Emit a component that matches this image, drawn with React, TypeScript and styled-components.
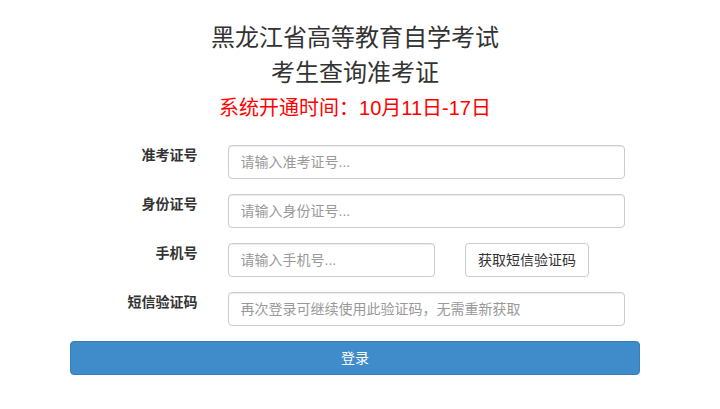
import React from "react";
import styled, { createGlobalStyle } from "styled-components";

const Global = createGlobalStyle`
  html, body { margin: 0; padding: 0; background: #fff; }
  body {
    font-family: "Liberation Sans", Arial, "Noto Sans CJK SC", sans-serif;
    font-size: 14px;
    color: #333;
  }
  * { box-sizing: border-box; }
`;

const Page = styled.div`
  padding: 20px 80px 0 70px;
  width: 720px;
`;

const Header = styled.header`
  text-align: center;
`;

const Title = styled.h1`
  margin: 0;
  font-size: 24px;
  line-height: 35px;
  font-weight: normal;
  color: #333;
`;

const Notice = styled.p`
  margin: 4px 0 0;
  font-size: 20px;
  line-height: 28px;
  color: #ff0000;
`;

const Form = styled.form`
  margin-top: 23px;
`;

const Row = styled.div`
  display: grid;
  grid-template-columns: 127.5px 1fr;
  column-gap: 30px;
  padding-right: 15px;
  margin-bottom: 15px;
`;

const Label = styled.label`
  text-align: right;
  font-weight: bold;
  font-size: 14px;
  line-height: 20px;
  color: #333;
`;

const Input = styled.input<{ $width?: string }>`
  display: block;
  width: ${(p) => p.$width || "100%"};
  height: 34px;
  padding: 6px 12px;
  font-size: 14px;
  line-height: 20px;
  font-family: inherit;
  color: #555;
  background: #fff;
  border: 1px solid #ccc;
  border-radius: 4px;
  box-shadow: inset 0 1px 1px rgba(0, 0, 0, 0.075);
  outline: none;
  &::placeholder { color: #999; }
`;

const Inline = styled.div`
  display: flex;
  gap: 30px;
  align-items: center;
`;

const SmsButton = styled.button`
  height: 34px;
  padding: 6px 12px;
  font-size: 14px;
  line-height: 20px;
  font-family: inherit;
  color: #333;
  background: #fff;
  border: 1px solid #ccc;
  border-radius: 4px;
  white-space: nowrap;
  cursor: pointer;
`;

const Submit = styled.button`
  display: block;
  width: 100%;
  height: 34px;
  padding: 6px 12px;
  font-size: 14px;
  line-height: 20px;
  font-family: inherit;
  color: #fff;
  background: #408bc9;
  border: 1px solid #357ebd;
  border-radius: 4px;
  cursor: pointer;
`;

export default function App() {
  return (
    <>
      <Global />
      <Page>
        <Header>
          <Title>黑龙江省高等教育自学考试</Title>
          <Title>考生查询准考证</Title>
          <Notice>系统开通时间：10月11日-17日</Notice>
        </Header>
        <Form onSubmit={(e) => e.preventDefault()}>
          <Row>
            <Label>准考证号</Label>
            <Input placeholder="请输入准考证号..." />
          </Row>
          <Row>
            <Label>身份证号</Label>
            <Input placeholder="请输入身份证号..." />
          </Row>
          <Row>
            <Label>手机号</Label>
            <Inline>
              <Input $width="207.5px" placeholder="请输入手机号..." />
              <SmsButton type="button">获取短信验证码</SmsButton>
            </Inline>
          </Row>
          <Row>
            <Label>短信验证码</Label>
            <Input placeholder="再次登录可继续使用此验证码，无需重新获取" />
          </Row>
          <Submit type="submit">登录</Submit>
        </Form>
      </Page>
    </>
  );
}
